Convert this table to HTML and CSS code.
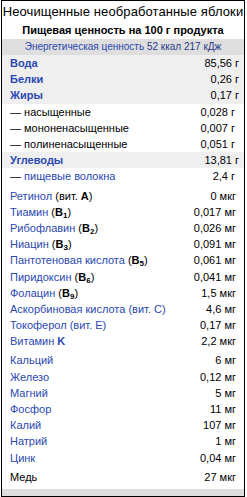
FILE: index.html
```html
<!DOCTYPE html>
<html lang="ru">
<head>
<meta charset="utf-8">
<link rel="stylesheet" href="styles.css">
</head>
<body>
<div class="box">
  <div class="title">Неочищенные необработанные яблоки</div>
  <div class="subtitle">Пищевая ценность на 100 г продукта</div>
  <div class="energy"><span class="link">Энергетическая ценность</span> 52 ккал 217 кДж</div>

  <div class="group gray">
    <div class="row"><span class="link b">Вода</span><span>85,56 г</span></div>
    <div class="row"><span class="link b">Белки</span><span>0,26 г</span></div>
    <div class="row"><span class="link b">Жиры</span><span>0,17 г</span></div>
  </div>
  <div class="group">
    <div class="row sub"><span>— насыщенные</span><span>0,028 г</span></div>
    <div class="row sub"><span>— мононенасыщенные</span><span>0,007 г</span></div>
    <div class="row sub"><span>— полиненасыщенные</span><span>0,051 г</span></div>
  </div>
  <div class="group gray">
    <div class="row"><span class="link b">Углеводы</span><span>13,81 г</span></div>
  </div>
  <div class="group">
    <div class="row sub"><span>— <span class="link">пищевые волокна</span></span><span>2,4 г</span></div>
  </div>

  <div class="group spaced">
    <div class="row"><span><span class="link">Ретинол</span> (вит. <b>A</b>)</span><span>0 мкг</span></div>
    <div class="row"><span><span class="link">Тиамин</span> (<b>B<sub>1</sub></b>)</span><span>0,017 мг</span></div>
    <div class="row"><span><span class="link">Рибофлавин</span> (<b>B<sub>2</sub></b>)</span><span>0,026 мг</span></div>
    <div class="row"><span><span class="link">Ниацин</span> (<b>B<sub>3</sub></b>)</span><span>0,091 мг</span></div>
    <div class="row"><span><span class="link">Пантотеновая кислота</span> (<b>B<sub>5</sub></b>)</span><span>0,061 мг</span></div>
    <div class="row"><span><span class="link">Пиридоксин</span> (<b>B<sub>6</sub></b>)</span><span>0,041 мг</span></div>
    <div class="row"><span><span class="link">Фолацин</span> (<b>B<sub>9</sub></b>)</span><span>1,5 мкг</span></div>
    <div class="row"><span class="link">Аскорбиновая кислота (вит. C)</span><span>4,6 мг</span></div>
    <div class="row"><span class="link">Токоферол (вит. E)</span><span>0,17 мг</span></div>
    <div class="row"><span class="link">Витамин <b>K</b></span><span>2,2 мкг</span></div>
  </div>

  <div class="group spaced">
    <div class="row"><span class="link">Кальций</span><span>6 мг</span></div>
    <div class="row"><span class="link">Железо</span><span>0,12 мг</span></div>
    <div class="row"><span class="link">Магний</span><span>5 мг</span></div>
    <div class="row"><span class="link">Фосфор</span><span>11 мг</span></div>
    <div class="row"><span class="link">Калий</span><span>107 мг</span></div>
    <div class="row"><span class="link">Натрий</span><span>1 мг</span></div>
    <div class="row"><span class="link">Цинк</span><span>0,04 мг</span></div>
  </div>

  <div class="group spaced last">
    <div class="row"><span>Медь</span><span>27 мкг</span></div>
  </div>
  <div class="footer"></div>
</div>
</body>
</html>
```
FILE: styles.css
```css
html, body {
  margin: 0;
  padding: 0;
  background: #fff;
}
body {
  font-family: "Liberation Sans", Arial, sans-serif;
  font-size: 11px;
  color: #000;
}
.box {
  box-sizing: border-box;
  width: 244px;
  height: 497px;
  margin-left: 1px;
  border: 1px solid #000;
  display: flex;
  flex-direction: column;
}
.title {
  font-size: 13px;
  line-height: 19px;
  text-align: center;
  white-space: nowrap;
  padding-top: 1px;
  letter-spacing: 0.1px;
}
.subtitle {
  font-weight: bold;
  text-align: center;
  line-height: 18px;
}
.energy {
  background: #dedede;
  text-align: center;
  line-height: 16px;
  font-size: 10px;
  color: #2a3a8a;
}
.link {
  color: #2a48b0;
}
.b {
  font-weight: bold;
}
b {
  font-weight: bold;
}
.group {
  display: flex;
  flex-direction: column;
}
.gray {
  background: #efefef;
}
.spaced {
  margin-top: 3px;
}
.last {
  margin-top: 3.5px;
}
.row {
  display: flex;
  justify-content: space-between;
  align-items: center;
  height: 16.2px;
  padding: 0 8px 0 8px;
  white-space: nowrap;
}
.gray .row {
  padding-right: 5px;
}
.row.sub {
  padding-right: 9px;
}
sub {
  font-size: 8px;
  line-height: 0;
  vertical-align: -2px;
}
.footer {
  margin-top: auto;
  height: 7px;
  background: #dedede;
}
```
